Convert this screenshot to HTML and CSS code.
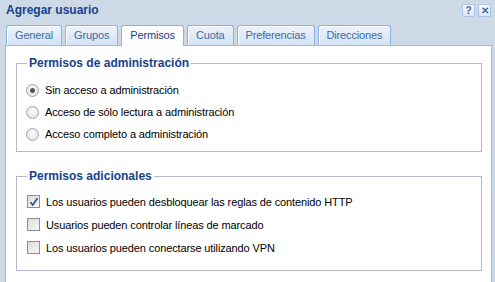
FILE: index.html
```html
<!DOCTYPE html>
<html lang="es">
<head>
    <meta charset="UTF-8">
    <title>Agregar usuario</title>
    <link rel="stylesheet" href="styles.css">
</head>
<body>
    <div class="window">
        <header class="win-header">
            <span class="win-title">Agregar usuario</span>
            <div class="win-tools">
                <span class="tool">?</span>
                <span class="tool">&#x2715;</span>
            </div>
        </header>
        <nav class="tabs">
            <span class="tab">General</span>
            <span class="tab">Grupos</span>
            <span class="tab active">Permisos</span>
            <span class="tab">Cuota</span>
            <span class="tab">Preferencias</span>
            <span class="tab">Direcciones</span>
        </nav>
        <section class="panel">
            <fieldset class="group">
                <legend>Permisos de administración</legend>
                <label class="row radio-row"><span class="radio checked"></span>Sin acceso a administración</label>
                <label class="row radio-row"><span class="radio"></span>Acceso de sólo lectura a administración</label>
                <label class="row radio-row"><span class="radio"></span>Acceso completo a administración</label>
            </fieldset>
            <fieldset class="group extra">
                <legend>Permisos adicionales</legend>
                <label class="row check-row"><span class="check checked">
                    <svg width="10" height="10" viewBox="0 0 10 10"><path d="M1.5 5.2 L3.8 8 L8.5 1.2" fill="none" stroke="#2d4a8a" stroke-width="1.6"/></svg>
                </span>Los usuarios pueden desbloquear las reglas de contenido HTTP</label>
                <label class="row check-row"><span class="check"></span>Usuarios pueden controlar líneas de marcado</label>
                <label class="row check-row"><span class="check"></span>Los usuarios pueden conectarse utilizando VPN</label>
            </fieldset>
        </section>
    </div>
</body>
</html>
```

FILE: styles.css
```css
body {
    margin: 0;
    padding: 0;
    background: #ced9e7;
    font-family: 'Liberation Sans', Arial, sans-serif;
    font-size: 11px;
    color: #000;
}
.window {
    height: 282px;
    display: flex;
    flex-direction: column;
    overflow: hidden;
}
.win-header {
    display: flex;
    justify-content: space-between;
    align-items: center;
    height: 19px;
    padding: 0 4px 0 6px;
}
.win-title {
    font-weight: bold;
    font-size: 12px;
    color: #15428b;
}
.win-tools {
    display: flex;
    gap: 3px;
    margin-top: 1px;
}
.tool {
    width: 11px;
    height: 11px;
    border: 1px solid #a9c1e2;
    border-radius: 2px;
    background: linear-gradient(#fbfdff, #dbe6f4);
    color: #3c64a8;
    font-size: 10px;
    font-weight: bold;
    line-height: 11px;
    text-align: center;
}
.tabs {
    display: flex;
    align-items: flex-end;
    gap: 3px;
    height: 26px;
    padding-left: 6px;
}
.tab {
    height: 19px;
    line-height: 19px;
    padding: 0 8px;
    border: 1px solid #8db2e3;
    border-bottom: none;
    border-radius: 3px 3px 0 0;
    background: linear-gradient(#edf3fb, #d3e2f4);
    box-shadow: inset 1px 1px 0 #fff;
    color: #416aa3;
    font-size: 11px;
    letter-spacing: -0.15px;
}
.tab.active {
    height: 20px;
    background: #fff;
    box-shadow: none;
    color: #15428b;
    position: relative;
    top: 1px;
    margin-top: -1px;
}
.panel {
    flex: 1;
    margin: 0 3px 0 5px;
    background: #fff;
    border: 1px solid #99bbe8;
    border-bottom: none;
    padding: 10px 9px 0 10px;
    letter-spacing: -0.12px;
}
.group {
    margin: 0;
    padding: 9px 10px 6px 10px;
    border: 1px solid #b5b8c8;
}
.group legend {
    padding: 0 2px;
    font-weight: bold;
    font-size: 12px;
    letter-spacing: 0;
    color: #15428b;
}
.group.extra {
    margin-top: 17px;
    padding-top: 5px;
    padding-bottom: 11px;
}
.row {
    display: flex;
    align-items: center;
    height: 22px;
    gap: 6px;
}
.check-row {
    height: 23px;
}
.check-row:first-of-type {
    margin-top: 2px;
}
.radio {
    width: 11px;
    height: 11px;
    margin-left: -1px;
    border: 1px solid #a3a3a3;
    border-radius: 50%;
    background: radial-gradient(circle at 50% 40%, #fdfdfd, #dcdcdc);
    display: flex;
    align-items: center;
    justify-content: center;
}
.radio.checked::after {
    content: '';
    width: 5px;
    height: 5px;
    border-radius: 50%;
    background: #555;
}
.check {
    width: 11px;
    height: 11px;
    border: 1px solid #8e8f8f;
    background: linear-gradient(135deg, #dcdcdc, #f7f7f7);
    display: flex;
    align-items: center;
    justify-content: center;
}
```
